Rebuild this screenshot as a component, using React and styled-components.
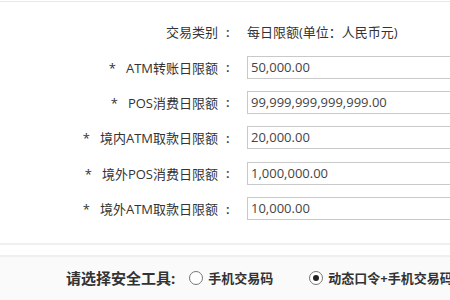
import React from "react";
import styled, { createGlobalStyle } from "styled-components";

const GlobalStyle = createGlobalStyle`
  html, body {
    margin: 0;
    padding: 0;
    background: #fff;
    overflow: hidden;
  }
  body {
    font-family: "Open Sans", "Noto Sans CJK SC", sans-serif;
    color: #333;
  }
`;

const Page = styled.div`
  width: 450px;
  height: 300px;
  overflow: hidden;
  display: flex;
  flex-direction: column;
`;

const Panel = styled.div`
  margin-top: 1px;
  border-top: 1px solid #e8e8e8;
  border-bottom: 2px solid #efefef;
  height: 244px;
  padding-top: 12px;
  box-sizing: border-box;
`;

const Form = styled.div`
  display: grid;
  grid-template-columns: 218px 29px 1fr;
  grid-auto-rows: 35.4px;
  align-items: center;
  font-size: 13px;
`;

const Label = styled.div`
  text-align: right;
  white-space: nowrap;
`;

const Star = styled.span`
  margin-right: 10px;
`;

const Colon = styled.div`
  padding-left: 8px;
  font-weight: 600;
`;

const Value = styled.div`
  white-space: nowrap;
`;

const Field = styled.div`
  width: 260px;
  height: 23px;
  box-sizing: border-box;
  border: 1px solid #c9c9c9;
  padding-left: 3px;
  line-height: 21px;
  color: #444;
  white-space: nowrap;
`;

const Footer = styled.div`
  margin-top: 10px;
  flex: 1;
  border-top: 2px solid #efefef;
  background: #fafafa;
  display: flex;
  align-items: center;
  padding-left: 66px;
  padding-bottom: 2px;
  white-space: nowrap;
`;

const Title = styled.span`
  font-size: 15px;
  font-weight: bold;
  color: #333;
  margin-right: 14px;
`;

const Option = styled.label`
  display: flex;
  align-items: center;
  font-size: 13px;
  font-weight: bold;
  color: #333;
  margin-right: ${(p) => p.$gap || 0}px;
`;

const Radio = styled.span`
  width: 12px;
  height: 12px;
  border-radius: 50%;
  border: 1px solid #777;
  background: #fff;
  margin-right: 5px;
  display: flex;
  align-items: center;
  justify-content: center;

  &::after {
    content: "";
    display: ${(p) => (p.$checked ? "block" : "none")};
    width: 6px;
    height: 6px;
    border-radius: 50%;
    background: #222;
  }
`;

const limits = [
  ["ATM转账日限额", "50,000.00"],
  ["POS消费日限额", "99,999,999,999,999.00"],
  ["境内ATM取款日限额", "20,000.00"],
  ["境外POS消费日限额", "1,000,000.00"],
  ["境外ATM取款日限额", "10,000.00"],
];

export default function App() {
  return (
    <Page>
      <GlobalStyle />
      <Panel>
        <Form>
          <Label>交易类别</Label>
          <Colon>:</Colon>
          <Value>每日限额(单位：人民币元)</Value>
          {limits.map(([name, amount]) => (
            <React.Fragment key={name}>
              <Label>
                <Star>*</Star>
                {name}
              </Label>
              <Colon>:</Colon>
              <Field>{amount}</Field>
            </React.Fragment>
          ))}
        </Form>
      </Panel>
      <Footer>
        <Title>请选择安全工具:</Title>
        <Option $gap={36}>
          <Radio />
          手机交易码
        </Option>
        <Option>
          <Radio $checked />
          动态口令+手机交易码
        </Option>
      </Footer>
    </Page>
  );
}
